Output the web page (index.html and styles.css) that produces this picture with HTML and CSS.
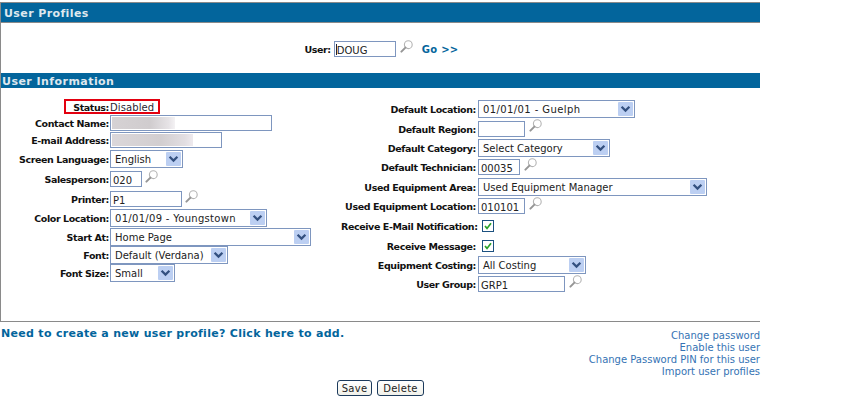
FILE: index.html
```html
<!DOCTYPE html>
<html lang="en">
<head>
<meta charset="utf-8">
<title>User Profiles</title>
<link rel="stylesheet" href="styles.css">
</head>
<body>
<svg class="defs" width="0" height="0" aria-hidden="true">
  <symbol id="mag" viewBox="0 0 13 13">
    <circle cx="8.3" cy="4.7" r="3.9" fill="#fff" stroke="#b4b4b4" stroke-width="1.1"/>
    <path d="M5.4 7.6 1.4 11.6" stroke="#969696" stroke-width="2" stroke-linecap="round"/>
  </symbol>
  <symbol id="chev" viewBox="0 0 15 14">
    <rect width="15" height="14" rx="1" fill="#bccff2"/>
    <path d="M3.6 4.8 7.5 8.6 11.4 4.8" fill="none" stroke="#33507f" stroke-width="2.3"/>
  </symbol>
  <symbol id="tick" viewBox="0 0 10 10">
    <path d="M2 5 4 7.4 8 2.2" fill="none" stroke="#2aa12a" stroke-width="1.7"/>
  </symbol>
</svg>
<main class="page">
  <section class="panel">
    <h1 class="bar bar--top">User Profiles</h1>
    <div class="lookup">
      <label class="label">User:</label>
      <span class="caret-wrap"><input class="input input--user" value="DOUG"><i class="caret"></i></span>
      <svg class="mag"><use href="#mag"/></svg>
      <a class="go">Go &gt;&gt;</a>
    </div>
    <h2 class="bar">User Information</h2>
    <div class="form">
      <div class="col col--left">
        <div class="row row--15"><span class="status-box"></span><label class="label">Status:</label><span class="value">Disabled</span></div>
        <div class="row row--17"><label class="label">Contact Name:</label><input class="input input--contact"></div>
        <div class="row row--18"><label class="label">E-mail Address:</label><input class="input input--email"></div>
        <div class="row row--20"><label class="label">Screen Language:</label><div class="select select--lang"><span>English</span><svg class="chev"><use href="#chev"/></svg></div></div>
        <div class="row row--20"><label class="label">Salesperson:</label><input class="input input--sales" value="020"><svg class="mag"><use href="#mag"/></svg></div>
        <div class="row row--20"><label class="label">Printer:</label><input class="input input--printer" value="P1"><svg class="mag"><use href="#mag"/></svg></div>
        <div class="row row--18"><label class="label">Color Location:</label><div class="select select--color"><span>01/01/09 - Youngstown</span><svg class="chev"><use href="#chev"/></svg></div></div>
        <div class="row row--19"><label class="label">Start At:</label><div class="select select--start"><span>Home Page</span><svg class="chev"><use href="#chev"/></svg></div></div>
        <div class="row row--18"><label class="label">Font:</label><div class="select select--font"><span>Default (Verdana)</span><svg class="chev"><use href="#chev"/></svg></div></div>
        <div class="row row--18"><label class="label">Font Size:</label><div class="select select--size"><span>Small</span><svg class="chev"><use href="#chev"/></svg></div></div>
      </div>
      <div class="col col--right">
        <div class="row row--20"><label class="label">Default Location:</label><div class="select select--loc"><span>01/01/01 - Guelph</span><svg class="chev"><use href="#chev"/></svg></div></div>
        <div class="row row--19"><label class="label">Default Region:</label><input class="input input--region"><svg class="mag"><use href="#mag"/></svg></div>
        <div class="row row--19"><label class="label">Default Category:</label><div class="select select--cat"><span>Select Category</span><svg class="chev"><use href="#chev"/></svg></div></div>
        <div class="row row--20"><label class="label">Default Technician:</label><input class="input input--tech" value="00035"><svg class="mag"><use href="#mag"/></svg></div>
        <div class="row row--19"><label class="label">Used Equipment Area:</label><div class="select select--area"><span>Used Equipment Manager</span><svg class="chev"><use href="#chev"/></svg></div></div>
        <div class="row row--20"><label class="label">Used Equipment Location:</label><input class="input input--region" value="010101"><svg class="mag"><use href="#mag"/></svg></div>
        <div class="row row--20"><label class="label">Receive E-Mail Notification:</label><span class="check"><svg class="tick"><use href="#tick"/></svg></span></div>
        <div class="row row--19"><label class="label">Receive Message:</label><span class="check"><svg class="tick"><use href="#tick"/></svg></span></div>
        <div class="row row--19"><label class="label">Equipment Costing:</label><div class="select select--cost"><span>All Costing</span><svg class="chev"><use href="#chev"/></svg></div></div>
        <div class="row row--20"><label class="label">User Group:</label><input class="input input--group" value="GRP1"><svg class="mag"><use href="#mag"/></svg></div>
      </div>
    </div>
  </section>
  <div class="foot">
    <a class="add">Need to create a new user profile? Click here to add.</a>
    <nav class="links">
      <a>Change password</a>
      <a>Enable this user</a>
      <a>Change Password PIN for this user</a>
      <a>Import user profiles</a>
    </nav>
  </div>
  <div class="actions">
    <button class="btn btn--save">Save</button>
    <button class="btn btn--delete">Delete</button>
  </div>
</main>
</body>
</html>
```
FILE: styles.css
```css
* { box-sizing: border-box; }
html, body { margin: 0; background: #fff; }
body { font: 10px "DejaVu Sans", Verdana, sans-serif; color: #111; overflow: hidden; }
.defs { position: absolute; }
.page { width: 760px; padding-top: 2px; }
.panel { border: 1px solid #8a8a8a; border-width: 1px 0 1px 1px; height: 320px; }
.bar { margin: 0; height: 15px; background: #03659c; color: #dfe8ee; font-size: 11px; font-weight: bold; line-height: 17px; padding-left: 1px; letter-spacing: .45px; }
.bar--top { height: 20px; line-height: 21px; padding-left: 3px; border-bottom: 1px solid #8a8a8a; letter-spacing: .4px; }
.lookup { height: 50px; display: flex; align-items: center; justify-content: center; padding: 2px 0 0 2px; }
.lookup .label { margin-right: 3px; }
.label { font-size: 9.5px; font-weight: bold; letter-spacing: -.4px; color: #111; white-space: nowrap; text-align: right; padding-top: 1px; }
.caret-wrap { position: relative; display: flex; }
.caret { position: absolute; left: 2px; top: 3px; width: 1px; height: 11px; background: #223; }
.input { height: 16px; border: 1px solid #7e96bf; padding: 2px 2px 0; font: 10px "DejaVu Sans", Verdana, sans-serif; color: #222; background: #fff; border-radius: 0; outline: 0; display: block; }
.input--user { width: 62px; }
.input--contact { width: 162px; background: linear-gradient(90deg, #d6d2d4 0, #d0ccce 60%, #e6e3e6 90%, #f4f2f4 100%) 1px 1px / 63px 12px no-repeat #fff; }
.input--email { width: 112px; background: linear-gradient(90deg, #dbd7da 0, #d2ced0 60%, #e2dee2 90%, #eeeaee 100%) 1px 1px / 81px 12px no-repeat #fff; }
.input--sales { width: 32px; }
.input--printer { width: 72px; }
.input--region { width: 47px; }
.input--tech { width: 42px; }
.input--group { width: 87px; }
.mag { width: 13px; height: 13px; margin: -6px 0 0 2px; flex: none; }
.lookup .mag { margin: -5px 0 0 4px; }
.go { color: #03659c; font-weight: bold; margin-left: 9px; letter-spacing: .3px; padding-top: 1px; }
.form { display: flex; padding-top: 11px; }
.col { display: flex; flex-direction: column; }
.col--left { width: 340px; }
.col--left .label { width: 108px; }
.col--left .row { gap: 1px; }
.col--right .label { width: 135px; }
.row { position: relative; display: flex; align-items: center; gap: 2px; }
.row--15 { height: 15px; }
.row--17 { height: 17px; }
.row--18 { height: 18px; }
.row--19 { height: 19px; }
.row--20 { height: 20px; }
.status-box { position: absolute; left: 63px; top: 0; width: 96px; height: 15px; border: 2px solid #e3000f; }
.value { color: #2a1f33; letter-spacing: .1px; padding-top: 1px; }
.select { height: 18px; border: 1px solid #7e96bf; background: #fff; display: flex; align-items: center; justify-content: space-between; padding: 0 1px 0 4px; color: #222; white-space: nowrap; flex: none; }
.select span { padding-top: 1px; }
.chev { width: 15px; height: 14px; flex: none; }
.select--lang { width: 73px; }
.select--color { width: 157px; letter-spacing: .3px; }
.select--start { width: 201px; }
.select--font { width: 118px; }
.select--size { width: 65px; }
.select--loc { width: 157px; letter-spacing: .4px; }
.select--cat { width: 132px; }
.select--area { width: 229px; }
.select--cost { width: 108px; }
.check { width: 12px; height: 12px; margin-left: 4px; border: 1px solid #1c5180; background: #fff; display: flex; }
.tick { width: 10px; height: 10px; }
.foot { display: flex; justify-content: space-between; padding-top: 5px; height: 58px; }
.add { color: #03659c; font-size: 11px; font-weight: bold; padding-left: 1px; letter-spacing: .3px; }
.links { display: flex; flex-direction: column; align-items: flex-end; line-height: 12px; padding-top: 3px; }
.links a { color: #3573b4; }
.actions { display: flex; justify-content: center; gap: 5px; padding-left: 1px; }
.btn { height: 16px; padding: 0; border: 1px solid #1c3a5c; border-radius: 3px; background: linear-gradient(#fff, #f1f1ea); color: #222; font: 10px "DejaVu Sans", Verdana, sans-serif; letter-spacing: .3px; }
.btn--save { width: 35px; }
.btn--delete { width: 47px; }
```
